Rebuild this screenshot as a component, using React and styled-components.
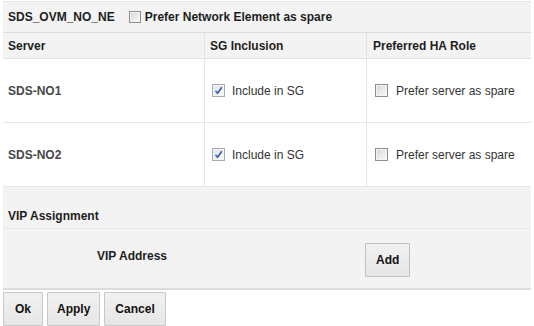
import React from "react";
import styled, { createGlobalStyle, css } from "styled-components";

const Global = createGlobalStyle`
  html, body { margin: 0; padding: 0; background: #ffffff; }
  body { font-family: "Liberation Sans", Arial, sans-serif; font-size: 12px; color: #222; }
`;

const Page = styled.div`
  width: 534px;
  height: 326px;
  overflow: hidden;
  padding-left: 3px;
  box-sizing: border-box;
`;

const Panel = styled.div`
  width: 528px;
  display: flex;
  flex-direction: column;
`;

const TitleBar = styled.div`
  height: 32px;
  box-sizing: border-box;
  margin-top: 1px;
  background: #f3f3f3;
  border-top: 1px solid #e6e6e6;
  border-bottom: 1px solid #dcdcdc;
  display: flex;
  align-items: center;
  padding-left: 5px;
`;

const Bold = styled.span`
  font-weight: bold;
  color: ${(p) => p.$color || "#1e1e1e"};
`;

const TitleLabel = styled(Bold)`
  margin-right: 14px;
`;

const BoxBase = styled.span`
  display: inline-block;
  box-sizing: border-box;
  width: ${(p) => p.$size}px;
  height: ${(p) => p.$size}px;
  flex: none;
  position: relative;
  border: 1px solid #8e8e8e;
  background: linear-gradient(135deg, #d2d2d2 0%, #e9e9e9 50%, #fbfbfb 100%);
  box-shadow: inset 0 0 0 1px #f4f4f4;
  ${(p) =>
    p.$checked &&
    css`
      border-color: #a5acb5;
      background: linear-gradient(135deg, #dfe3e8 0%, #eef0f3 60%, #ffffff 100%);
    `}
`;

const CheckSvg = styled.svg`
  position: absolute;
  left: 1px;
  top: 1px;
`;

function CheckBox({ checked, size = 13 }) {
  return (
    <BoxBase $size={size} $checked={checked}>
      {checked && (
        <CheckSvg width={size - 4} height={size - 4} viewBox="0 0 9 9">
          <path d="M1.5 4.8 L3.6 7.2 L7.8 1.2" fill="none" stroke="#3d5e9e" strokeWidth="1.7" />
        </CheckSvg>
      )}
    </BoxBase>
  );
}

const CheckLabel = styled.label`
  display: flex;
  align-items: center;
  gap: ${(p) => p.$gap || 7}px;
  color: ${(p) => (p.$bold ? "#1e1e1e" : "#333")};
  font-weight: ${(p) => (p.$bold ? "bold" : "normal")};
`;

const Grid = styled.div`
  display: grid;
  grid-template-columns: 202px 162px 164px;
`;

const HeadCell = styled.div`
  height: 26px;
  box-sizing: border-box;
  background: #f3f3f3;
  border-bottom: 1px solid #e2e2e2;
  border-right: ${(p) => (p.$last ? "none" : "1px solid #e2e2e2")};
  display: flex;
  align-items: center;
  padding-left: ${(p) => p.$pad || 5}px;
  font-weight: bold;
  color: #1e1e1e;
`;

const Cell = styled.div`
  height: 64px;
  box-sizing: border-box;
  background: #ffffff;
  border-bottom: 1px solid #e6e6e6;
  border-right: ${(p) => (p.$last ? "none" : "1px solid #e6e6e6")};
  display: flex;
  align-items: center;
  padding-left: ${(p) => p.$pad || 5}px;
`;

const Vip = styled.div`
  height: 103px;
  box-sizing: border-box;
  background: #f3f3f3;
  border-bottom: 2px solid #dcdcdc;
  display: flex;
  flex-direction: column;
`;

const VipHead = styled.div`
  height: 42px;
  box-sizing: border-box;
  display: flex;
  align-items: center;
  padding: 17px 0 0 5px;
  border-bottom: 1px solid #e8e8e8;
  font-weight: bold;
  color: #1e1e1e;
`;

const VipRow = styled.div`
  flex: 1;
  display: grid;
  grid-template-columns: 362px auto;
  align-items: center;
`;

const VipLabel = styled.div`
  padding-left: 94px;
  font-weight: bold;
  color: #1e1e1e;
  margin-top: -6px;
`;

const Button = styled.button`
  font-family: "Liberation Sans", Arial, sans-serif;
  font-size: 12px;
  font-weight: bold;
  color: #111;
  height: 34px;
  padding: 0 ${(p) => p.$pad || 11}px;
  box-sizing: border-box;
  border: 1px solid ${(p) => p.$border || "#c8c8c8"};
  border-radius: 1px;
  background: linear-gradient(#f1f1f1, #e6e6e6);
  cursor: pointer;
`;

const AddWrap = styled.div`
  display: flex;
  margin-top: 2px;
`;

const Footer = styled.div`
  display: flex;
  gap: 4px;
  margin-top: 2px;
`;

export default function App() {
  return (
    <Page>
      <Global />
      <Panel>
        <TitleBar>
          <TitleLabel>SDS_OVM_NO_NE</TitleLabel>
          <CheckLabel $bold $gap={4}>
            <CheckBox size={12} />
            Prefer Network Element as spare
          </CheckLabel>
        </TitleBar>
        <Grid>
          <HeadCell>Server</HeadCell>
          <HeadCell>SG Inclusion</HeadCell>
          <HeadCell $last $pad={6}>Preferred HA Role</HeadCell>
          {["SDS-NO1", "SDS-NO2"].map((name) => (
            <React.Fragment key={name}>
              <Cell>
                <Bold $color="#474747">{name}</Bold>
              </Cell>
              <Cell $pad={7}>
                <CheckLabel $gap={7}>
                  <CheckBox checked />
                  Include in SG
                </CheckLabel>
              </Cell>
              <Cell $last $pad={8}>
                <CheckLabel $gap={8}>
                  <CheckBox />
                  Prefer server as spare
                </CheckLabel>
              </Cell>
            </React.Fragment>
          ))}
        </Grid>
        <Vip>
          <VipHead>VIP Assignment</VipHead>
          <VipRow>
            <VipLabel>VIP Address</VipLabel>
            <AddWrap>
              <Button $border="#b9c1cc" $pad={10}>Add</Button>
            </AddWrap>
          </VipRow>
        </Vip>
        <Footer>
          <Button $pad={11}>Ok</Button>
          <Button $pad={9}>Apply</Button>
          <Button $pad={10}>Cancel</Button>
        </Footer>
      </Panel>
    </Page>
  );
}
